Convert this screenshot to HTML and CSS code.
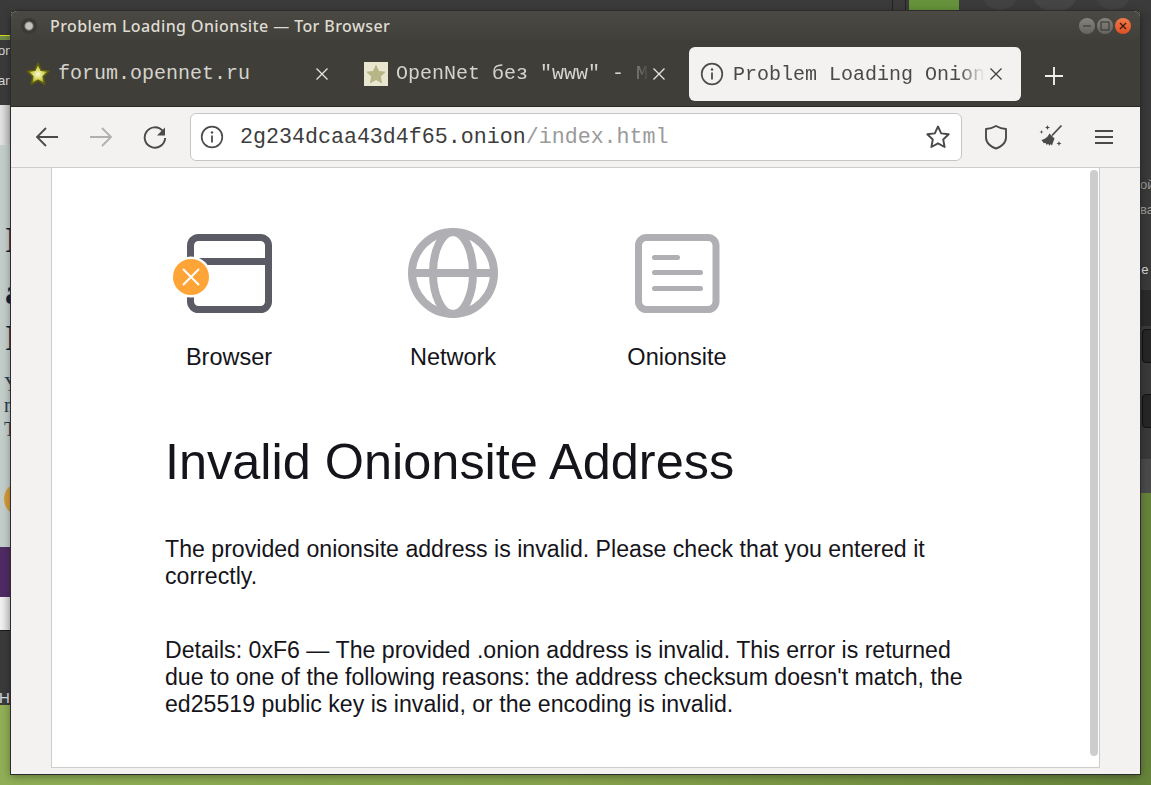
FILE: index.html
```html
<!DOCTYPE html>
<html lang="en">
<head>
<meta charset="utf-8">
<title>Problem Loading Onionsite — Tor Browser</title>
<link rel="stylesheet" href="styles.css">
</head>
<body>
<div class="desktop">
  <div class="top-strip">
    <span class="top-line top-line-a"></span>
    <span class="top-line top-line-b"></span>
    <span class="top-green"></span>
    <span class="top-blob top-blob-a"></span>
    <span class="top-blob top-blob-b"></span>
    <span class="top-blob top-blob-c"></span>
  </div>
  <div class="left-strip">
    <div class="ls-top"><span class="ls-yellow"></span><span class="ls-bar"></span><span class="ls-t1">on</span><span class="ls-t2">an</span></div>
    <div class="ls-light"></div>
    <div class="ls-page">
      <span class="big b1">I</span><span class="big b2">a</span><span class="big b3">I</span>
      <span class="small s1">Y</span><span class="small s2">n</span><span class="small s3">T</span>
      <span class="ls-orange"></span>
    </div>
    <div class="ls-purple"></div>
    <div class="ls-white"></div>
    <div class="ls-dark"><span class="ls-h">H</span></div>
  </div>
  <div class="right-strip">
    <span class="rs-t rs1">ой</span><span class="rs-t rs2">ва</span><span class="rs-t rs3">не</span>
    <span class="rs-row rs-row-a"></span>
    <span class="rs-btn rs-btn-a"></span>
    <span class="rs-btn rs-btn-b"></span>
    <span class="rs-band"></span>
  </div>

  <div class="window">
    <header class="titlebar">
      <span class="app-dot"></span>
      <span class="title">Problem Loading Onionsite — Tor Browser</span>
      <div class="win-btns">
        <span class="win-btn"><svg width="10" height="10" viewBox="0 0 10 10"><path d="M1 5h8" stroke="#33322e" stroke-width="1"/></svg></span>
        <span class="win-btn"><svg width="10" height="10" viewBox="0 0 10 10"><rect x="1" y="1" width="8" height="8" fill="none" stroke="#33322e" stroke-width="1"/></svg></span>
        <span class="win-btn win-close"><svg width="10" height="10" viewBox="0 0 10 10"><path d="M2 2l6 6M8 2l-6 6" stroke="#3b1a0c" stroke-width="1.3"/></svg></span>
      </div>
    </header>

    <nav class="tabstrip">
      <div class="tab tab-one">
        <svg class="fav" width="24" height="24" viewBox="0 0 24 24">
          <defs><radialGradient id="starfill" cx="50%" cy="52%" r="50%"><stop offset="0" stop-color="#fbfbd8"/><stop offset=".5" stop-color="#d5d560"/><stop offset="1" stop-color="#8a8a18"/></radialGradient></defs>
          <path d="M12 1.200l3.200 7.100 7.600.9-5.600 5.300 1.500 7.700-6.700-3.900-6.700 3.900 1.500-7.700-5.600-5.300 7.600-.9z" fill="url(#starfill)" stroke="#5e5e0c" stroke-width="1.600" stroke-linejoin="round"/>
        </svg>
        <span class="tab-text">forum.opennet.ru</span>
        <svg class="tab-x" width="14" height="14" viewBox="0 0 14 14"><path d="M1.5 1.5l11 11M12.5 1.5l-11 11" stroke="#e8e6e0" stroke-width="1.3"/></svg>
      </div>
      <div class="tab tab-two">
        <svg class="fav" width="24" height="24" viewBox="0 0 24 24"><rect width="24" height="24" fill="#e9e6cf"/><path d="M12 2.5l3 6.4 6.8.8-5 4.8 1.4 6.9-6.2-3.5-6.2 3.5 1.4-6.9-5-4.8 6.800-.8z" fill="#b6b585"/></svg>
        <span class="tab-text tab-fade">OpenNet без "www" - Мир</span>
        <svg class="tab-x" width="14" height="14" viewBox="0 0 14 14"><path d="M1.500 1.500l11 11M12.500 1.500l-11 11" stroke="#e8e6e0" stroke-width="1.300"/></svg>
      </div>
      <div class="tab tab-active">
        <svg class="fav" width="24" height="24" viewBox="0 0 24 24"><circle cx="12" cy="12" r="10.300" fill="none" stroke="#4c4c4c" stroke-width="1.700"/><circle cx="12" cy="7.500" r="1.200" fill="#4c4c4c"/><path d="M12 10.500v7" stroke="#4c4c4c" stroke-width="1.800"/></svg>
        <span class="tab-text tab-fade">Problem Loading Onionsite</span>
        <svg class="tab-x" width="14" height="14" viewBox="0 0 14 14"><path d="M1.500 1.500l11 11M12.500 1.500l-11 11" stroke="#3f3f3f" stroke-width="1.300"/></svg>
      </div>
      <svg class="new-tab" width="18" height="18" viewBox="0 0 18 18"><path d="M9 0v18M0 9h18" stroke="#f0eee8" stroke-width="1.900"/></svg>
    </nav>

    <div class="toolbar">
      <button class="tool" type="button" aria-label="Back"><svg width="24" height="24" viewBox="0 0 24 24"><path d="M23 12H2M11 3l-9 9 9 9" fill="none" stroke="#4a4a4a" stroke-width="1.800"/></svg></button>
      <button class="tool tool-fwd" type="button" aria-label="Forward"><svg width="24" height="24" viewBox="0 0 24 24"><path d="M1 12h21M13 3l9 9-9 9" fill="none" stroke="#b0b0b0" stroke-width="1.800"/></svg></button>
      <button class="tool tool-reload" type="button" aria-label="Reload"><svg width="24" height="24" viewBox="0 0 24 24"><path d="M19.600 5.800A10.200 10.200 0 1 0 22.100 13" fill="none" stroke="#4a4a4a" stroke-width="1.900"/><path d="M22 2.500v8h-8z" fill="#4a4a4a"/></svg></button>
      <div class="urlbar">
        <svg width="24" height="24" viewBox="0 0 24 24"><circle cx="12" cy="12" r="10.300" fill="none" stroke="#4c4c4c" stroke-width="1.700"/><circle cx="12" cy="7.500" r="1.200" fill="#4c4c4c"/><path d="M12 10.500v7" stroke="#4c4c4c" stroke-width="1.800"/></svg>
        <span class="url"><span class="url-host">2g234dcaa43d4f65.onion</span><span class="url-path">/index.html</span></span>
        <svg class="url-star" width="26" height="26" viewBox="0 0 26 26"><path d="M13 2.500l3.200 6.900 7.500.9-5.500 5.200 1.400 7.500-6.600-3.700-6.600 3.700 1.400-7.500-5.500-5.200 7.500-.9z" fill="none" stroke="#4a4a4a" stroke-width="1.900" stroke-linejoin="round"/></svg>
      </div>
      <div class="tool-right">
        <svg width="24" height="26" viewBox="0 0 24 26"><path d="M12 2C9 3.800 5.500 4.800 2 5v8.500C2 19 7 23 12 24.500c5-1.500 10-5.500 10-11V5c-3.500-.2-7-1.200-10-3z" fill="none" stroke="#4a4a4a" stroke-width="1.900" stroke-linejoin="round"/></svg>
        <svg width="26" height="26" viewBox="0 0 26 26"><path d="M23.500 1.500L14 11.500" stroke="#4a4a4a" stroke-width="1.800"/><path d="M11.500 9.500l5 5-1.500 4-1 3-1.500-1.500-.8 1.800-1.700-2-1.200 1.200-1.500-2.200-1.500.5-2.300-3.300c3-.5 6-2.500 8-6.500z" fill="#4a4a4a"/><path d="M9.500 1l.7 1.800 1.800.7-1.800.7-.7 1.800-.7-1.800L7 3.500l1.800-.7zM3.500 6l.5 1.500 1.500.5-1.500.5-.5 1.500L3 8.500 1.500 8 3 7.500zM21 17l.7 1.800 1.800.7-1.800.7L21 22l-.7-1.800-1.800-.7 1.800-.7z" fill="#4a4a4a"/></svg>
        <svg width="20" height="16" viewBox="0 0 20 16"><path d="M1 2h18M1 8h18M1 14h18" stroke="#4a4a4a" stroke-width="1.900"/></svg>
      </div>
    </div>

    <main class="page-area">
      <div class="page">
        <div class="steps">
          <div class="step">
            <div class="step-icon">
              <svg width="90" height="90" viewBox="0 0 90 90"><rect x="6.500" y="9.500" width="78" height="72" rx="8" fill="none" stroke="#5b5b66" stroke-width="7"/><path d="M6 33.500h79" stroke="#5b5b66" stroke-width="7"/></svg>
              <svg class="badge" width="42" height="42" viewBox="0 0 42 42"><circle cx="21" cy="21" r="20.500" fill="#fff"/><circle cx="21" cy="21" r="18" fill="#ffa436"/><path d="M13 13l16 16M29 13L13 29" stroke="#fff" stroke-width="2"/></svg>
            </div>
            <div class="step-label">Browser</div>
          </div>
          <div class="step">
            <div class="step-icon">
              <svg width="90" height="90" viewBox="0 0 90 90"><circle cx="45" cy="45" r="41" fill="none" stroke="#afafb4" stroke-width="8"/><ellipse cx="45" cy="45" rx="20" ry="41" fill="none" stroke="#afafb4" stroke-width="8"/><path d="M4 45h82" stroke="#afafb4" stroke-width="8"/></svg>
            </div>
            <div class="step-label">Network</div>
          </div>
          <div class="step">
            <div class="step-icon">
              <svg width="90" height="90" viewBox="0 0 90 90"><rect x="6.500" y="9.500" width="77.500" height="72" rx="8" fill="none" stroke="#afafb4" stroke-width="7"/><path d="M22.500 29.500h23M22.500 44.500h46M22.500 60.500h46" stroke="#afafb4" stroke-width="5" stroke-linecap="round"/></svg>
            </div>
            <div class="step-label">Onionsite</div>
          </div>
        </div>
        <h1 class="heading">Invalid Onionsite Address</h1>
        <p class="para">The provided onionsite address is invalid. Please check that you entered it correctly.</p>
        <p class="para para-details">Details: 0xF6 — The provided .onion address is invalid. This error is returned due to one of the following reasons: the address checksum doesn't match, the ed25519 public key is invalid, or the encoding is invalid.</p>
        <span class="scrollthumb"></span>
      </div>
    </main>
  </div>
</div>
</body>
</html>
```
FILE: styles.css
```css
* { box-sizing: border-box; }
html, body { margin: 0; padding: 0; height: 100%; overflow: hidden; }
body { background: #8aa650; font-family: "Liberation Sans", sans-serif; }

.desktop { position: relative; width: 1151px; height: 785px; overflow: hidden;
  background: linear-gradient(90deg, #8fae55 0, #86a24c 50%, #66833a 100%); }

.top-strip { position: absolute; left: 0; top: 0; width: 1151px; height: 12px; background: #3b3b3b; overflow: hidden; }
.top-line { position: absolute; top: 0; height: 11px; width: 1px; background: #222; }
.top-line-a { left: 892px; }
.top-line-b { left: 905px; }
.top-green { position: absolute; left: 909px; top: 0; width: 50px; height: 10px; background: #65923a; }
.top-blob { position: absolute; top: -26px; width: 36px; height: 36px; border-radius: 50%; background: #424242; }
.top-blob-a { left: 982px; }
.top-blob-b { left: 1030px; width: 50px; height: 50px; top: -38px; background: #454545; }
.top-blob-c { left: 1095px; }

.left-strip { position: absolute; left: 0; top: 0; width: 11px; height: 785px; display: flex; flex-direction: column; overflow: hidden; }
.ls-top { position: relative; height: 105px; background: #3a3a3a; }
.ls-yellow { position: absolute; left: 0; top: 35px; width: 11px; height: 1px; background: #d8d820; }
.ls-bar { position: absolute; left: 0; top: 36px; width: 11px; height: 4px; background: #6f8a45; }
.ls-t1, .ls-t2 { position: absolute; left: -2px; font: 13px "Liberation Sans", sans-serif; color: #d8d8d8; }
.ls-t1 { top: 43px; }
.ls-t2 { top: 73px; }
.ls-light { height: 40px; background: linear-gradient(90deg, #e4e4e4, #bdbdbd); }
.ls-page { position: relative; flex: 0 0 402px; background: #c2cdca; overflow: hidden; }
.big { position: absolute; left: 5px; font: bold 36px "Liberation Serif", serif; color: #0e2440; line-height: 40px; }
.b1 { top: 75px; }
.b2 { top: 127px; }
.b3 { top: 173px; }
.small { position: absolute; left: 4px; font: 20px "Liberation Serif", serif; color: #2a3c50; line-height: 20px; }
.s1 { top: 229px; }
.s2 { top: 250px; }
.s3 { top: 274px; }
.ls-orange { position: absolute; left: 4px; top: 337px; width: 34px; height: 34px; border-radius: 50%; background: #d39a3c; }
.ls-purple { height: 50px; background: #4f2b63; }
.ls-white { height: 33px; background: linear-gradient(90deg, #f2f2f2, #d4d4d4); }
.ls-dark { position: relative; height: 75px; background: #3a3a3a; border-top: 1px solid #1c1c1c; }
.ls-h { position: absolute; left: -1px; top: 58px; font: 15px "Liberation Sans", sans-serif; color: #d6dde0; }

.right-strip { position: absolute; left: 1140px; top: 12px; width: 11px; height: 481px; background: #393939; overflow: hidden; }
.rs-t { position: absolute; left: 0; font: 13px "Liberation Sans", sans-serif; color: #9a9a9a; white-space: nowrap; }
.rs1 { top: 165px; }
.rs2 { top: 190px; }
.rs3 { top: 250px; left: -6px; color: #dcdcdc; }
.rs-row { position: absolute; left: 0; width: 11px; }
.rs-row-a { top: 278px; height: 36px; background: #2a2a2a; }
.rs-btn { position: absolute; left: 2px; width: 14px; height: 34px; border: 1px solid #111; border-radius: 4px; background: #262626; }
.rs-btn-a { top: 317px; }
.rs-btn-b { top: 382px; }
.rs-band { position: absolute; left: 0; top: 447px; width: 11px; height: 34px; background: #4a4a4a; }

.window { position: absolute; left: 11px; top: 11px; width: 1129px; height: 763px; display: flex; flex-direction: column;
  background: #f3f2f0; border-radius: 6px 6px 0 0; box-shadow: 0 0 0 1px #2c2c2c, 0 2px 8px rgba(0,0,0,.4); overflow: hidden; }

.titlebar { flex: 0 0 30px; display: flex; align-items: center; background: linear-gradient(#4b4943, #403f3a); }
.app-dot { flex: 0 0 16px; height: 16px; margin-left: 10px; border-radius: 50%; background: radial-gradient(circle, #c4c2bc 0 28%, #3a3935 45% 75%, #4a4843 100%); }
.title { margin-left: 13px; font: 500 16px "Noto Sans", sans-serif; letter-spacing: .4px; color: #dfdbd2; white-space: nowrap; }
.win-btns { margin-left: auto; margin-right: 9px; display: flex; gap: 2px; }
.win-btn { width: 16px; height: 16px; border-radius: 50%; display: flex; align-items: center; justify-content: center; background: linear-gradient(#85837c, #66645e); }
.win-close { background: linear-gradient(#f37a4b, #df4f22); }

.tabstrip { flex: 0 0 66px; display: flex; align-items: center; padding: 0 0 0 1px; background: #3f3e39; border-bottom: 1px solid #2a2925; }
.tab { position: relative; height: 54px; flex: 0 0 auto; display: flex; align-items: center; overflow: hidden; }
.tab-one { width: 337px; padding-left: 14px; }
.tab-two { width: 340px; padding-left: 15px; }
.tab-active { width: 332px; padding-left: 11px; background: #f3f2f0; border-radius: 6px; margin-top: 1px; }
.tab-text { margin-left: 8px; width: 240px; font: 20px "Liberation Mono", monospace; color: #d5d3cd; white-space: nowrap; overflow: hidden; }
.tab-two .tab-text { margin-left: 8px; width: 254px; color: #d5d3cd;
  -webkit-mask-image: linear-gradient(90deg, #000 88%, transparent); mask-image: linear-gradient(90deg, #000 88%, transparent); }
.tab-active .tab-text { margin-left: 9px; width: 252px; color: #4a4a4a;
  -webkit-mask-image: linear-gradient(90deg, #000 90%, transparent); mask-image: linear-gradient(90deg, #000 90%, transparent); }
.tab-x { position: absolute; top: 20px; }
.tab-one .tab-x { right: 20px; }
.tab-two .tab-x { right: 23px; }
.tab-active .tab-x { right: 18px; }
.new-tab { margin-left: 24px; margin-top: 4px; flex: none; }

.toolbar { flex: 0 0 61px; display: flex; align-items: center; background: #f3f2f0; border-bottom: 1px solid #cfcdca; padding-left: 24px; }
.tool { flex: none; width: 24px; height: 24px; padding: 0; margin: 0 30px 0 0; border: 0; background: none; display: block; }
.tool svg { display: block; }
.tool-reload { margin-right: 23px; }
.urlbar { flex: 0 0 772px; height: 48px; display: flex; align-items: center; padding: 0 10px 0 9px; background: #fff; border: 1px solid #c8c6c3; border-radius: 6px; }
.url { margin: 1px 0 0 16px; font: 21.650px "Liberation Mono", monospace; white-space: nowrap; }
.url-host { color: #3d3d3d; }
.url-path { color: #9a9a9a; }
.url-star { margin-left: auto; }
.tool-right { display: flex; align-items: center; margin-left: 22px; gap: 30px; }

.page-area { flex: 1; display: flex; padding: 0 40px 6px 40px; }
.page { position: relative; flex: 1; background: #fff; border: 1px solid #cfcdca; border-top: 0; padding: 60px 0 0 113px; }
.steps { display: flex; margin-left: -48px; }
.step { width: 224px; display: flex; flex-direction: column; align-items: center; }
.step-icon { position: relative; width: 90px; height: 90px; }
.step-icon svg { display: block; }
.badge { position: absolute; left: -14px; top: 28px; }
.step-label { margin-top: 25px; font-size: 23.500px; line-height: 28px; color: #15141a; }
.heading { margin: 61px 0 0; font-weight: 400; font-size: 50.450px; line-height: 60px; color: #15141a; }
.para { margin: 44px 0 0; width: 810px; font-size: 23.130px; line-height: 27px; color: #15141a; }
.para-details { margin-top: 47px; }
.scrollthumb { position: absolute; right: 1px; top: 2px; width: 8px; height: 586px; border-radius: 4px; background: #cdcdcd; }
```
